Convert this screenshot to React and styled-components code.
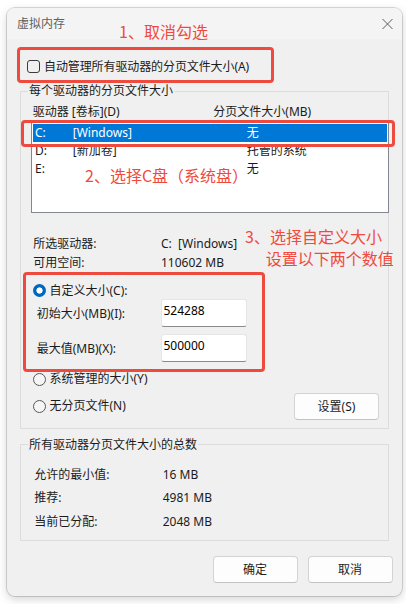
import { Fragment } from "react";
import styled, { createGlobalStyle } from "styled-components";

const GlobalStyle = createGlobalStyle`
  html, body {
    margin: 0;
    padding: 0;
    background: #ffffff;
  }
  body {
    font-family: "Noto Sans", "Noto Sans CJK SC", sans-serif;
    font-size: 12px;
    color: #1b1b1b;
  }
`;

const Screen = styled.div`
  position: relative;
  width: 406px;
  height: 604px;
  overflow: hidden;
  padding: 8px 0 0 7px;
  box-sizing: border-box;
`;

const Window = styled.div`
  width: 395px;
  height: 588px;
  background: #f0f0f0;
  border-radius: 8px;
  box-shadow: 0 0 0 1px rgba(0, 0, 0, 0.14), 0 3px 10px rgba(0, 0, 0, 0.18);
  overflow: hidden;
  display: flex;
  flex-direction: column;
`;

const TitleBar = styled.div`
  height: 31px;
  flex: none;
  background: #f4f4f4;
  display: flex;
  align-items: center;
  justify-content: space-between;
  padding: 0 9px 0 10px;
`;

const Title = styled.span`
  color: #5f5f5f;
  line-height: 16px;
`;

const Body = styled.div`
  padding: 20px 13px 0 13px;
  display: flex;
  flex-direction: column;
`;

const CheckRow = styled.label`
  display: flex;
  align-items: center;
  gap: 4px;
  height: 16px;
  line-height: 16px;
  margin-left: 7px;
  letter-spacing: -0.1px;
`;

const CheckBox = styled.span`
  width: 13px;
  height: 13px;
  box-sizing: border-box;
  border: 1px solid #3b3b3b;
  border-radius: 3px;
  margin-top: -2px;
`;

const Group = styled.fieldset`
  margin: 8px 0 0 0;
  padding: 0 0 ${(p) => p.$pb}px 0;
  border: 1px solid #dcdcdc;
  min-width: 0;
`;

const Legend = styled.legend`
  padding: 0 1px;
  margin-left: 7px;
  line-height: 16px;
`;

const ListHeader = styled.div`
  display: grid;
  grid-template-columns: 180.6px auto;
  margin: 5px 0 0 11.7px;
  line-height: 16px;
`;

const ListBox = styled.div`
  margin: 2px -1px 0 10px;
  height: 91px;
  box-sizing: border-box;
  border: 1px solid #828790;
  background: #ffffff;
  padding: 1px;
`;

const DriveRow = styled.div`
  display: grid;
  grid-template-columns: 37.7px 174px 1fr;
  height: 18px;
  line-height: 18px;
  padding-left: 2px;
  background: ${(p) => (p.$selected ? "#0078d7" : "transparent")};
  color: ${(p) => (p.$selected ? "#ffffff" : "#1b1b1b")};
`;

const InfoList = styled.div`
  display: grid;
  grid-template-columns: ${(p) => p.$col}px auto;
  margin: ${(p) => p.$mt}px 0 0 ${(p) => p.$ml}px;
  line-height: ${(p) => p.$lh}px;
`;

const RadioRow = styled.div`
  display: flex;
  align-items: center;
  gap: 4px;
  height: 16px;
  line-height: 16px;
  margin: ${(p) => p.$mt || 0}px 0 0 11.5px;
`;

const Radio = styled.span`
  width: 13px;
  height: 13px;
  flex: none;
  box-sizing: border-box;
  border-radius: 50%;
  ${(p) =>
    p.$checked
      ? "background: radial-gradient(circle, #ffffff 0 2.8px, #0067c0 3.4px);"
      : "border: 1px solid #575757; background: #f5f5f5;"}
`;

const SizeRow = styled.div`
  display: grid;
  grid-template-columns: 124.3px 86px;
  align-items: center;
  margin: ${(p) => p.$mt}px 0 0 15.7px;
`;

const Field = styled.div`
  height: 28px;
  box-sizing: border-box;
  background: #ffffff;
  border: 1px solid #e6e6e6;
  border-bottom: 1px solid #8a8a8a;
  border-radius: 3px;
  padding: 3px 0 0 1.5px;
  line-height: 16px;
  color: #000000;
`;

const BottomRow = styled.div`
  display: flex;
  align-items: center;
  justify-content: space-between;
  margin: 5.5px 9px 0 0;
  height: 27px;

  & > ${RadioRow} {
    margin-top: 0;
  }
`;

const PushButton = styled.button`
  width: ${(p) => p.$w}px;
  height: 27px;
  background: #fdfdfd;
  border: 1px solid #d3d3d3;
  border-bottom-color: #c2c2c2;
  border-radius: 4px;
  font-family: inherit;
  font-size: 12px;
  color: #1b1b1b;
  padding: 0;
`;

const Footer = styled.div`
  display: flex;
  justify-content: flex-end;
  gap: 10px;
  margin: 15px -3.5px 0 0;
`;

const Note = styled.div`
  position: absolute;
  left: ${(p) => p.$x}px;
  top: ${(p) => p.$y}px;
  color: #ef4a3d;
  font-family: "Noto Sans CJK SC", sans-serif;
  font-size: 16px;
  line-height: ${(p) => p.$lh || 20}px;
  white-space: nowrap;
`;

const NoteLine = styled.div`
  padding-left: ${(p) => p.$indent || 0}px;
`;

const Mark = styled.div`
  position: absolute;
  left: ${(p) => p.$x}px;
  top: ${(p) => p.$y}px;
  width: ${(p) => p.$w}px;
  height: ${(p) => p.$h}px;
  box-sizing: border-box;
  border: 3px solid #ee4a3e;
  border-radius: 4px;
`;

const drives = [
  { letter: "C:", label: "[Windows]", size: "无", selected: true },
  { letter: "D:", label: "[新加卷]", size: "托管的系统" },
  { letter: "E:", label: "", size: "无" },
];

const totals = [
  ["允许的最小值:", "16 MB"],
  ["推荐:", "4981 MB"],
  ["当前已分配:", "2048 MB"],
];

export default function App() {
  return (
    <>
      <GlobalStyle />
      <Screen>
        <Window>
          <TitleBar>
            <Title>虚拟内存</Title>
            <svg width="11" height="10" viewBox="0 0 11 10">
              <path d="M0.5 0 L10.5 10 M10.5 0 L0.5 10" stroke="#5a5a5a" strokeWidth="1" fill="none" />
            </svg>
          </TitleBar>
          <Body>
            <CheckRow>
              <CheckBox />
              <span>自动管理所有驱动器的分页文件大小(A)</span>
            </CheckRow>

            <Group $pb={8}>
              <Legend>每个驱动器的分页文件大小</Legend>
              <ListHeader>
                <span>驱动器 [卷标](D)</span>
                <span>分页文件大小(MB)</span>
              </ListHeader>
              <ListBox>
                {drives.map((d) => (
                  <DriveRow key={d.letter} $selected={d.selected}>
                    <span>{d.letter}</span>
                    <span>{d.label}</span>
                    <span>{d.size}</span>
                  </DriveRow>
                ))}
              </ListBox>

              <InfoList $col={127.7} $mt={22} $ml={12.3} $lh={18.5}>
                <span>所选驱动器:</span>
                <span>C:&nbsp;&nbsp;[Windows]</span>
                <span>可用空间:</span>
                <span>110602 MB</span>
              </InfoList>

              <RadioRow $mt={10.5}>
                <Radio $checked />
                <span>自定义大小(C):</span>
              </RadioRow>
              <SizeRow $mt={0}>
                <span>初始大小(MB)(I):</span>
                <Field>524288</Field>
              </SizeRow>
              <SizeRow $mt={7}>
                <span>最大值(MB)(X):</span>
                <Field>500000</Field>
              </SizeRow>
              <RadioRow $mt={9.5}>
                <Radio />
                <span>系统管理的大小(Y)</span>
              </RadioRow>
              <BottomRow>
                <RadioRow>
                  <Radio />
                  <span>无分页文件(N)</span>
                </RadioRow>
                <PushButton $w={85}>设置(S)</PushButton>
              </BottomRow>
            </Group>

            <Group $pb={6.5}>
              <Legend>所有驱动器分页文件大小的总数</Legend>
              <InfoList $col={128.4} $mt={10} $ml={13.3} $lh={23.5}>
                {totals.map(([k, v]) => (
                  <Fragment key={k}>
                    <span>{k}</span>
                    <span>{v}</span>
                  </Fragment>
                ))}
              </InfoList>
            </Group>

            <Footer>
              <PushButton $w={85}>确定</PushButton>
              <PushButton $w={85}>取消</PushButton>
            </Footer>
          </Body>
        </Window>

        <Mark $x={17.3} $y={46.7} $w={256.7} $h={36.6} />
        <Mark $x={21} $y={120} $w={374} $h={27} />
        <Mark $x={22.7} $y={272} $w={242.3} $h={100} />

        <Note $x={119} $y={21}>1、取消勾选</Note>
        <Note $x={85} $y={165}>2、选择C盘（系统盘）</Note>
        <Note $x={245} $y={226} $lh={21.6}>
          <NoteLine>3、选择自定义大小</NoteLine>
          <NoteLine $indent={20.7}>设置以下两个数值</NoteLine>
        </Note>
      </Screen>
    </>
  );
}
